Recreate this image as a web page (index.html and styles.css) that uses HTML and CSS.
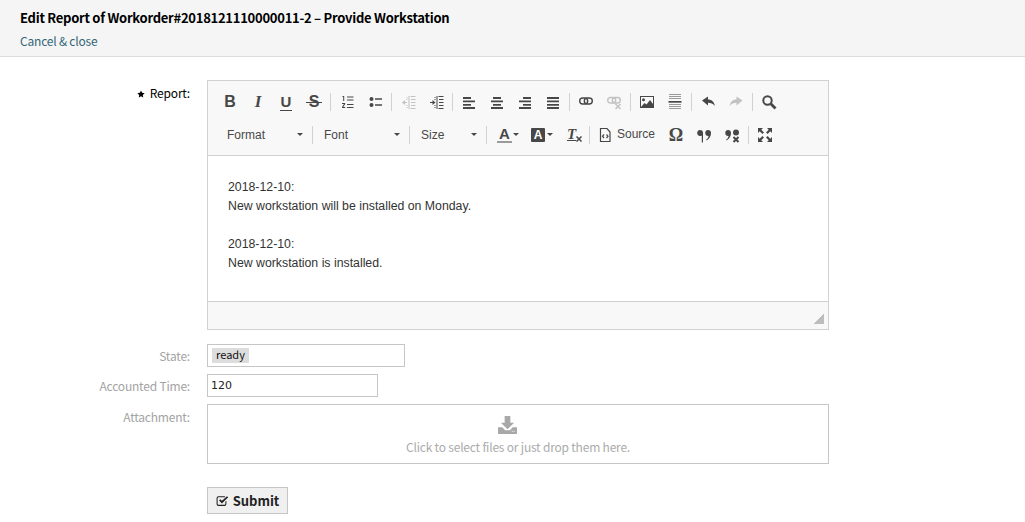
FILE: index.html
```html
<!DOCTYPE html>
<html lang="en">
<head>
<meta charset="utf-8">
<title>Edit Report</title>
<link rel="stylesheet" href="styles.css">
</head>
<body>
<header class="head">
  <h1 class="title">Edit Report of Workorder#2018121110000011-2 – Provide Workstation</h1>
  <a class="close" href="#">Cancel &amp; close</a>
</header>
<form class="form">
  <label class="label required"><svg class="star" viewBox="0 0 16 16"><path d="M8 1l2.200 4.700 5.100.7-3.700 3.600.9 5.100L8 12.600l-4.500 2.500.9-5.100L.7 6.400l5.100-.7z"/></svg>Report:</label>
  <div class="editor">
    <div class="toolbar">
      <div class="row">
        <span class="btn glyph bold">B</span>
        <span class="btn glyph italic">I</span>
        <span class="btn glyph under">U</span>
        <span class="btn glyph strike">S</span>
        <i class="sep"></i>
        <span class="btn"><svg class="ic" viewBox="0 0 16 16"><path d="M3.500 2h1.700v5H4.200V3h-.7zM3 9h3.200v1L4.300 13h2v1H3v-1l2-3H3zM8 2.500h6.500v1H8zM8 5.500h6.500v1H8zM8 10h6.500v1H8zM8 13h6.500v1H8z"/></svg></span>
        <span class="btn"><svg class="ic" viewBox="0 0 16 16"><circle cx="4.500" cy="5" r="2"/><circle cx="4.500" cy="11" r="2"/><path d="M8 4.300h7v1.400H8zM8 10.300h7v1.400H8z"/></svg></span>
        <i class="sep"></i>
        <span class="btn dim"><svg class="ic" viewBox="0 0 16 16"><path d="M8.500 2h1v13h-1zM10.500 2h5v1h-5zM11 5h4.500v1H11zM11 8h4.500v1H11zM11 11h4.500v1H11zM10.500 14h5v1h-5zM6.500 3h1v1h-1zM6.500 5h1v1h-1zM6.500 11h1v1h-1zM6.500 13h1v1h-1zM2 8.500L5 6v2h2v1H5v2z"/></svg></span>
        <span class="btn"><svg class="ic" viewBox="0 0 16 16"><path d="M8.500 2h1v13h-1zM10.500 2h5v1h-5zM11 5h4.500v1H11zM11 8h4.500v1H11zM11 11h4.500v1H11zM10.500 14h5v1h-5zM6.500 3h1v1h-1zM6.500 5h1v1h-1zM6.500 11h1v1h-1zM6.500 13h1v1h-1zM7.500 8.500L4.500 6v2H2v1h2.500v2z"/></svg></span>
        <i class="sep"></i>
        <span class="btn"><svg class="ic" viewBox="0 0 16 16"><path d="M2 3h8v2H2zM2 6.500h12v1.700H2zM2 10h8v1.700H2zM2 13h12v2H2z"/></svg></span>
        <span class="btn"><svg class="ic" viewBox="0 0 16 16"><path d="M4 3h8v2H4zM2 6.500h12v1.700H2zM4 10h8v1.700H4zM2 13h12v2H2z"/></svg></span>
        <span class="btn"><svg class="ic" viewBox="0 0 16 16"><path d="M6 3h8v2H6zM2 6.500h12v1.700H2zM6 10h8v1.700H6zM2 13h12v2H2z"/></svg></span>
        <span class="btn"><svg class="ic" viewBox="0 0 16 16"><path d="M2 3h12v2H2zM2 6.500h12v1.700H2zM2 10h12v1.700H2zM2 13h12v2H2z"/></svg></span>
        <i class="sep"></i>
        <span class="btn"><svg class="ic" viewBox="0 0 16 16"><rect x="1.700" y="4" width="8" height="6" rx="3" class="line"/><rect x="6.300" y="4" width="8" height="6" rx="3" class="line"/></svg></span>
        <span class="btn dim"><svg class="ic" viewBox="0 0 16 16"><rect x="1.700" y="3.500" width="8" height="5.500" rx="2.700" class="line"/><rect x="6.300" y="3.500" width="8" height="5.500" rx="2.700" class="line"/><path d="M9.500 10l5 5M14.500 10l-5 5" class="line"/></svg></span>
        <i class="sep"></i>
        <span class="btn"><svg class="ic" viewBox="0 0 16 16"><path fill-rule="evenodd" d="M1 2h14v12H1zM2 3v10h12V3z"/><path d="M2 13l3.500-4 2 1.500L11 6l3 4v3z"/><circle cx="4.500" cy="5.700" r="1.500"/></svg></span>
        <span class="btn"><svg class="ic" viewBox="0 0 16 16"><path class="pale" d="M2 0h12v1H2zM2 2h12v1H2zM2 4h12v1H2zM2 10h12v1H2zM2 12h12v1H2zM2 14h12v1H2z"/><path d="M1.500 7h13v1.700h-13z"/></svg></span>
        <i class="sep"></i>
        <span class="btn"><svg class="ic" viewBox="0 0 16 16"><path d="M2 7L8 3v3c3.500 0 6 2 7 6.500-2-2.700-4-3.300-7-3.300V12z" transform="translate(0 -.5)"/></svg></span>
        <span class="btn dim"><svg class="ic" viewBox="0 0 16 16"><path d="M14.500 7l-6-4v3C5 6 2.500 8 1.500 12.500c2-2.700 4-3.300 7-3.300V12z" transform="translate(0 -.5)"/></svg></span>
        <i class="sep"></i>
        <span class="btn"><svg class="ic" viewBox="0 0 16 16"><circle cx="6.500" cy="6.500" r="4.200" class="thick"/><path d="M9.800 9.800l4.700 4.700" class="thicker"/></svg></span>
      </div>
      <div class="row">
        <span class="combo format"><span>Format</span><b class="arrow"></b></span>
        <i class="sep"></i>
        <span class="combo font"><span>Font</span><b class="arrow"></b></span>
        <i class="sep"></i>
        <span class="combo size"><span>Size</span><b class="arrow"></b></span>
        <i class="sep"></i>
        <span class="btn text-color"><span class="txt-a">A</span><b class="arrow"></b></span>
        <span class="btn back-color"><span class="bg-a">A</span><b class="arrow"></b></span>
        <span class="btn glyph clear"><span class="tx">T</span><svg class="x" viewBox="0 0 6 6"><path d="M.5.500l5 5M5.500.500l-5 5"/></svg></span>
        <i class="sep"></i>
        <span class="btn source"><svg class="ic" viewBox="0 0 16 16"><path class="mid" d="M3.500 1.500h6.500l3 3.500v9.500H3.500z"/><path class="mid" d="M7 7.500L5.500 9.200 7 11M9.500 7.500L11 9.200 9.500 11"/></svg><span class="source-text">Source</span></span>
        <span class="btn glyph omega">Ω</span>
        <span class="btn"><svg class="ic" viewBox="0 0 16 16"><path d="M4 3a3 3 0 0 1 3 3v9.500H5.800V8.500A3 3 0 1 1 4 3z"/><path d="M12 3a3 3 0 0 1 3 3c0 3-1.500 5.500-4.500 7.500l-.4-.8c1.600-1 2.200-2.200 2.500-3.700a3 3 0 1 1-.6-6z"/></svg></span>
        <span class="btn"><svg class="ic" viewBox="0 0 16 16"><path d="M4 3a3 3 0 0 1 3 3c0 3-1.500 5.500-4.500 7.500l-.4-.8c1.600-1 2.200-2.200 2.500-3.700a3 3 0 1 1-.6-6z"/><circle cx="12" cy="5.500" r="3"/><path d="M9.500 10l5 5M14.500 10l-5 5" class="thick"/></svg></span>
        <i class="sep"></i>
        <span class="btn"><svg class="ic" viewBox="0 0 16 16"><path d="M1 1h5L4.300 2.700 7 5.400 5.400 7 2.700 4.300 1 6zM15 1v5l-1.700-1.700L10.600 7 9 5.400l2.700-2.700L10 1zM1 15v-5l1.700 1.700L5.400 9 7 10.600l-2.700 2.700L6 15zM15 15h-5l1.700-1.700L9 10.600 10.600 9l2.700 2.700L15 10z"/></svg></span>
      </div>
    </div>
    <div class="content">
      <p>2018-12-10:</p>
      <p>New workstation will be installed on Monday.</p>
      <p class="gap">2018-12-10:</p>
      <p>New workstation is installed.</p>
    </div>
    <div class="foot"><i class="grip"></i></div>
  </div>
  <label class="label">State:</label>
  <div class="state"><span class="tag">ready</span></div>
  <label class="label">Accounted Time:</label>
  <input class="time" value="120">
  <label class="label attach">Attachment:</label>
  <div class="drop">
    <svg class="dl" viewBox="0 0 20 19"><path d="M7 0h6v7h4l-7 7-7-7h4z"/><path fill-rule="evenodd" d="M0 12h4.500l3 3h5l3-3H20v7H0zM14.500 15.500v1h1v-1zM16.500 15.500v1h1v-1z"/></svg>
    <span>Click to select files or just drop them here.</span>
  </div>
  <span></span>
  <button class="submit" type="button"><svg class="chk" viewBox="0 0 16 14"><path d="M3 1h8v1.300H3a1 1 0 0 0-1 1v7.400a1 1 0 0 0 1 1h7.500a1 1 0 0 0 1-1V8l1.300-1.300v4A2.300 2.300 0 0 1 10.500 13H3a2.300 2.300 0 0 1-2.300-2.300V3.300A2.300 2.300 0 0 1 3 1z"/><path d="M3.800 6.300l1.500-1.500 2 2L13.500 1 15 2.500 7.300 10z"/></svg>Submit</button>
</form>
</body>
</html>
```
FILE: styles.css
```css
* { box-sizing: border-box; }
html, body { margin: 0; padding: 0; }
body {
  background: #fff;
  color: #000;
  font-family: "Noto Sans CJK SC", "Noto Sans", sans-serif;
  font-size: 12px;
  overflow: hidden;
}
.head {
  height: 57px;
  padding: 10px 20px 0;
  background: #f5f5f5;
  border-bottom: 1px solid #ddd;
}
.title {
  margin: 0;
  font-size: 13px;
  letter-spacing: -.26px;
  line-height: 16px;
  font-weight: 700;
  color: #000;
}
.close {
  display: block;
  margin-top: 7px;
  font-size: 12px;
  letter-spacing: -.2px;
  line-height: 15px;
  color: #336677;
  text-decoration: none;
}
.form {
  display: grid;
  grid-template-columns: 190px 622px;
  column-gap: 17px;
  row-gap: 7px;
  align-items: start;
  padding-top: 23px;
}
.label {
  display: block;
  text-align: right;
  color: #a3a3a3;
  font-size: 12px;
  letter-spacing: -.2px;
  line-height: 23px;
}
.label.required { color: #000; line-height: 26px; }
.label.attach { line-height: 25px; }
.star { width: 8px; height: 8px; margin-right: 5px; fill: #000; }

.editor {
  height: 250px;
  margin-bottom: 7px;
  display: flex;
  flex-direction: column;
  border: 1px solid #d1d1d1;
  font-family: "Liberation Sans", Arial, sans-serif;
}
.toolbar {
  height: 75px;
  padding: 4px 0 0 8px;
  background: #f8f8f8;
  border-bottom: 1px solid #d1d1d1;
}
.row { display: flex; align-items: center; height: 33px; }
.btn {
  position: relative;
  flex: none;
  width: 28px;
  height: 24px;
  display: flex;
  align-items: center;
  justify-content: center;
  color: #474747;
}
.ic { width: 16px; height: 16px; fill: #474747; }
.line { fill: none; stroke: #474747; stroke-width: 1.4; }
.mid { fill: none; stroke: #474747; stroke-width: 1.2; }
.thick { fill: none; stroke: #474747; stroke-width: 2; }
.thicker { fill: none; stroke: #474747; stroke-width: 2.8; }
.pale { fill: #9a9a9a; }
.dim { opacity: .3; }
.sep {
  flex: none;
  width: 1px;
  height: 18px;
  margin: 0 2px;
  background: #d1d1d1;
}
.glyph { font-size: 16px; font-weight: 700; }
.italic { font-family: "Liberation Serif", serif; font-style: italic; font-size: 17px; }
.under { font-size: 15px; }
.under::after {
  content: "";
  position: absolute;
  left: 8px;
  right: 8px;
  bottom: 3px;
  height: 1px;
  background: #474747;
}
.strike::after {
  content: "";
  position: absolute;
  left: 6px;
  right: 6px;
  top: 12px;
  height: 1px;
  background: #474747;
}
.omega { font-family: "Liberation Serif", serif; font-size: 18px; padding-top: 2px; }
.clear { justify-content: flex-start; padding-left: 8px; }
.tx { font-family: "Liberation Serif", serif; font-style: italic; text-decoration: underline; font-size: 15px; }
.x { width: 6px; height: 6px; margin: 8px 0 0 0; fill: none; stroke: #474747; stroke-width: 1.5; }
.combo {
  flex: none;
  position: relative;
  height: 24px;
  display: flex;
  align-items: center;
  padding-left: 9px;
  font-size: 12px;
  color: #484848;
}
.format { width: 94px; padding-left: 11px; }
.font { width: 92px; }
.size { width: 72px; }
.arrow {
  position: absolute;
  right: 7px;
  top: 10px;
  width: 0;
  height: 0;
  border: 3px solid transparent;
  border-top-color: #474747;
  border-bottom: 0;
}
.text-color { width: 36px; justify-content: flex-start; padding-left: 8px; }
.back-color { width: 34px; justify-content: flex-start; padding-left: 6px; }
.text-color .arrow, .back-color .arrow { right: 6px; }
.txt-a {
  width: 15px;
  text-align: center;
  font-size: 15px;
  font-weight: 700;
  line-height: 15px;
  border-bottom: 2px solid #9a9a9a;
}
.bg-a {
  width: 14px;
  height: 14px;
  text-align: center;
  font-size: 12px;
  font-weight: 700;
  line-height: 14px;
  color: #fff;
  background: #474747;
  border-radius: 1px;
}
.source { width: 70px; justify-content: flex-start; padding-left: 5px; font-size: 12px; color: #484848; }
.source-text { margin: 0 0 2px 4px; }
.content {
  height: 146px;
  padding: 22px 20px 0;
  background: #fff;
  border-bottom: 1px solid #d1d1d1;
  font-size: 12.3px;
  line-height: 19px;
  color: #333;
}
.content p { margin: 0; }
.content .gap { margin-top: 19px; }
.foot { flex: 1; position: relative; background: #f8f8f8; }
.grip {
  position: absolute;
  right: 4px;
  bottom: 5px;
  width: 10px;
  height: 10px;
  background: linear-gradient(135deg, transparent 50%, #bdbdbd 50%);
}
.state {
  width: 198px;
  height: 23px;
  padding: 3px 4px;
  border: 1px solid #c6c6c6;
  background: #fff;
}
.tag {
  display: block;
  width: 37px;
  height: 15px;
  text-align: center;
  background: #ddd;
  color: #111;
  font-size: 11px;
  line-height: 13px;
}
.time {
  display: block;
  width: 171px;
  height: 23px;
  margin: 0;
  padding: 0 3px;
  border: 1px solid #c6c6c6;
  box-shadow: none;
  outline: none;
  font-family: "DejaVu Sans", sans-serif;
  font-size: 11px;
  color: #222;
}
.drop {
  height: 60px;
  margin-bottom: 16px;
  display: flex;
  flex-direction: column;
  align-items: center;
  border: 1px solid #c6c6c6;
  color: #ababab;
  font-size: 12px;
  letter-spacing: -.2px;
  line-height: 16px;
  padding-top: 11px;
}
.dl { width: 19px; height: 18px; margin: 0 22px 5px 0; fill: #a8a8a8; }
.submit {
  width: 81px;
  height: 27px;
  padding: 0;
  display: flex;
  align-items: center;
  justify-content: center;
  border: 1px solid #c6c6c6;
  background: #f0f0f0;
  font-family: "Noto Sans CJK SC", "Noto Sans", sans-serif;
  font-size: 13px;
  font-weight: 700;
  color: #222;
}
.chk { width: 13px; height: 12px; margin-right: 4px; fill: #222; }
```
